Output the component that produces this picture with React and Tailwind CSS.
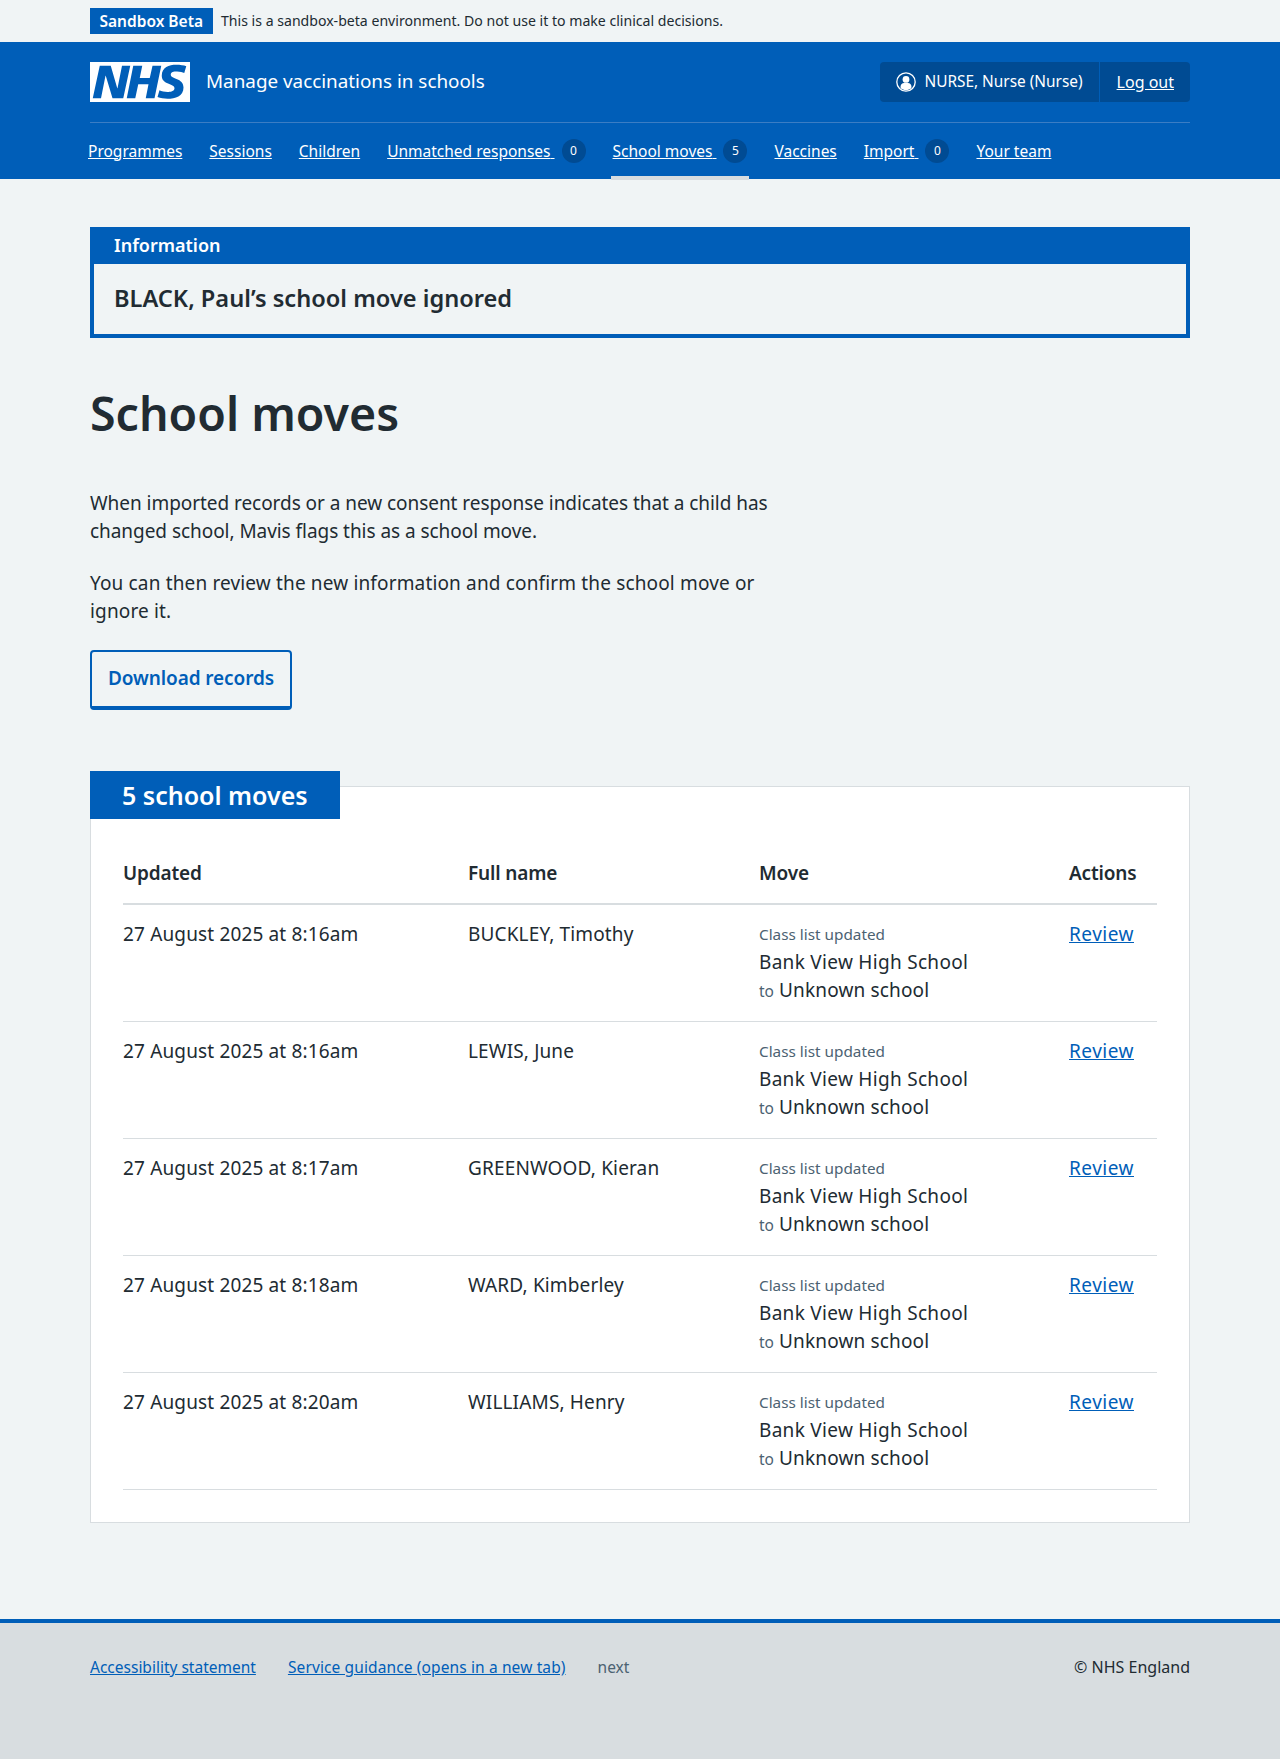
const rows = [
  ["27 August 2025 at 8:16am", "BUCKLEY, Timothy"],
  ["27 August 2025 at 8:16am", "LEWIS, June"],
  ["27 August 2025 at 8:17am", "GREENWOOD, Kieran"],
  ["27 August 2025 at 8:18am", "WARD, Kimberley"],
  ["27 August 2025 at 8:20am", "WILLIAMS, Henry"],
];

function NavItem({ label, count, active }) {
  return (
    <div className={"flex h-[57px] items-center px-[2px] mr-[23px] border-b-4 pt-[2px] " + (active ? "border-[#d8dde0]" : "border-transparent")}>
      <a href="#" className="underline whitespace-pre text-white">{label}{count !== undefined ? " " : ""}</a>
      {count !== undefined && (
        <span className="ml-[7px] flex h-[24px] w-[24px] items-center justify-center rounded-full bg-[#004b93] text-[12px] text-white">{count}</span>
      )}
    </div>
  );
}

function NhsLogo() {
  return (
    <svg viewBox="0 0 40 16" className="h-[40px] w-[100px] block" aria-label="NHS">
      <path fill="#fff" d="M0 0h40v16H0z" />
      <path fill="#005eb8" d="M3.9 1.5h4.4l2.6 9h.1l1.8-9h3.3l-2.8 13H9l-2.7-9h-.1l-1.8 9H1.1M17.3 1.5h3.6l-1 4.9h4L25 1.5h3.5l-2.7 13h-3.5l1.1-5.6h-4.1l-1.2 5.6h-3.4M37.7 4.4c-.7-.3-1.6-.6-2.9-.6-1.4 0-2.5.2-2.5 1.3 0 1.8 5.1 1.2 5.1 5.1 0 3.6-3.3 4.5-6.4 4.5-1.3 0-2.9-.3-4-.7l.8-2.7c.7.4 2.1.7 3.2.7s2.8-.2 2.8-1.5c0-2.1-5.1-1.3-5.1-5 0-3.4 2.9-4.4 5.8-4.4 1.6 0 3.1.2 4 .6" />
    </svg>
  );
}

function UserIcon() {
  return (
    <svg viewBox="0 0 20 20" className="h-[20px] w-[20px] block">
      <circle cx="10" cy="10" r="9.2" fill="none" stroke="#fff" strokeWidth="1.3" />
      <circle cx="10" cy="7.4" r="3.4" fill="#fff" />
      <path fill="#fff" d="M4.6 16v-1.6c0-2 1.6-3.4 3.4-3.4h4c1.8 0 3.4 1.4 3.4 3.4V16c-1.4 1.4-3.3 2.2-5.4 2.2S6 17.4 4.6 16z" />
    </svg>
  );
}

export default function App() {
  return (
    <div className="min-h-[1759px] flex flex-col bg-[#f0f4f5] text-[#212b32] font-['Noto_Sans',sans-serif] text-[19px] leading-[28px]">
      <div className="h-[42px] flex items-start pt-[8px] px-[90px]">
        <span className="h-[26px] flex items-center bg-[#005eb8] px-[9.5px] text-[15.5px] font-semibold text-white">Sandbox Beta</span>
        <span className="ml-[8.5px] h-[26px] flex items-center text-[14.1px]">This is a sandbox-beta environment. Do not use it to make clinical decisions.</span>
      </div>

      <header className="bg-[#005eb8] h-[137px] px-[90px] text-white">
        <div className="h-[81px] flex items-start justify-between border-b border-[#3b7dc4] pt-[20px]">
          <div className="flex items-center">
            <NhsLogo />
            <span className="ml-[16px] pb-[2px] text-[18.85px]">Manage vaccinations in schools</span>
          </div>
          <div className="flex h-[40px] items-center rounded-[4px] bg-[#004b93] text-[16px]">
            <div className="flex h-full items-center gap-[8px] px-[16px] border-r border-[#005eb8] text-[15.4px]">
              <UserIcon />
              <span>NURSE, Nurse (Nurse)</span>
            </div>
            <a href="#" className="pl-[17px] pr-[16px] underline">Log out</a>
          </div>
        </div>
        <nav className="flex -ml-[4px] text-[15.5px]">
          <NavItem label="Programmes" />
          <NavItem label="Sessions" />
          <NavItem label="Children" />
          <NavItem label="Unmatched responses" count={0} />
          <NavItem label="School moves" count={5} active />
          <NavItem label="Vaccines" />
          <NavItem label="Import" count={0} />
          <NavItem label="Your team" />
        </nav>
      </header>

      <main className="flex-1 px-[90px] pt-[48px]">
        <div className="border-4 border-[#005eb8]">
          <div className="bg-[#005eb8] h-[33px] pl-[20px] flex items-start text-[18px] font-semibold leading-[28px] text-white">Information</div>
          <p className="h-[70px] pl-[20px] pb-[2px] flex items-center text-[23.6px] font-semibold">BLACK, Paul’s school move ignored</p>
        </div>

        <h1 className="mt-[47px] text-[46.5px] leading-[56px] font-semibold">School moves</h1>

        <div className="mt-[48px] w-[720px]">
          <p className="tracking-[-0.05px]">When imported records or a new consent response indicates that a child has changed school, Mavis flags this as a school move.</p>
          <p className="mt-[24px] tracking-[0.15px]">You can then review the new information and confirm the school move or ignore it.</p>
        </div>

        <button className="mt-[25px] block h-[60px] rounded-[4px] border-2 border-b-4 border-[#005eb8] px-[16px] pb-[3px] text-[19px] tracking-[-0.1px] font-semibold text-[#005eb8]">Download records</button>

        <section className="relative mt-[76px] bg-white border border-[#d8dde0] px-[32px] pt-[48px] pb-[32px]">
          <h2 className="absolute -left-px -top-[16px] flex h-[48px] w-[250px] items-center bg-[#005eb8] pl-[32px] text-[25px] font-semibold text-white">5 school moves</h2>
          <table className="w-full table-fixed border-collapse text-left">
            <thead>
              <tr className="border-b-2 border-[#d8dde0] tracking-[-0.15px]">
                <th className="w-[345px] h-[69px] pt-[8px] font-semibold">Updated</th>
                <th className="w-[291px] pt-[8px] font-semibold">Full name</th>
                <th className="w-[310px] pt-[8px] font-semibold">Move</th>
                <th className="pt-[8px] font-semibold">Actions</th>
              </tr>
            </thead>
            <tbody>
              {rows.map(([date, name]) => (
                <tr key={date + name} className="border-b border-[#d8dde0] align-top tracking-[0.15px]">
                  <td className="pt-[15px] pb-[16px]">{date}</td>
                  <td className="pt-[15px] pb-[16px]">{name}</td>
                  <td className="pt-[15px] pb-[16px]">
                    <div className="text-[15.3px] tracking-normal text-[#4c6272]">Class list updated</div>
                    <div className="tracking-[0.3px]">Bank View High School</div>
                    <div><span className="text-[15.5px] tracking-normal text-[#4c6272]">to</span> Unknown school</div>
                  </td>
                  <td className="pt-[15px] pb-[16px]"><a href="#" className="text-[#005eb8] underline tracking-[0.5px]">Review</a></td>
                </tr>
              ))}
            </tbody>
          </table>
        </section>
      </main>

      <footer className="mt-[96px] h-[140px] border-t-4 border-[#005eb8] bg-[#d8dde0] px-[90px] pt-[30px] flex justify-between text-[16px]">
        <div className="flex gap-[32px] text-[15.5px]">
          <a href="#" className="text-[#005eb8] underline">Accessibility statement</a>
          <a href="#" className="text-[#005eb8] underline tracking-[0.12px]">Service guidance (opens in a new tab)</a>
          <span className="text-[#4c6272]">next</span>
        </div>
        <span>© NHS England</span>
      </footer>
    </div>
  );
}
